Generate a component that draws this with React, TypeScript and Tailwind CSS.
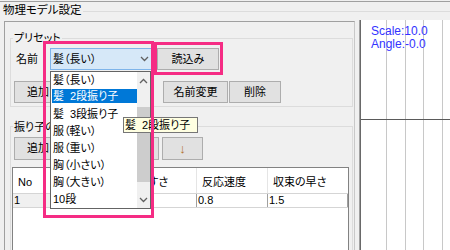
import React from 'react';

const btn = "flex h-[22px] items-center justify-center border border-[#adadad] bg-[#e1e1e1] leading-none";

const items = ["髪（長い）", "髪|2段振り子", "髪|3段振り子", "服（軽い）", "服（重い）", "胸（小さい）", "胸（大きい）", "10段"];

// "髪|2段振り子" -> 髪 + gap + 2段振り子
const Label = ({ t }: { t: string }) => {
  const [a, b] = t.split("|");
  if (b === undefined) return <>{t}</>;
  return (
    <>
      {a}
      <span className="inline-block w-[6px]" />
      {b}
    </>
  );
};

const Chevron = ({ up }: { up?: boolean }) => (
  <svg width="9" height="6" viewBox="0 0 9 6">
    <path d={up ? "M1 5 L4.5 1.5 L8 5" : "M1 1 L4.5 4.5 L8 1"} fill="none" stroke="#606060" strokeWidth="1.3" />
  </svg>
);

const Dropdown = () => (
  <div className="absolute left-[50px] top-[71px] flex h-[138px] w-[101px] border border-[#646464] bg-white">
    <div className="w-[86px]">
      {items.map((t, i) =>
        i === 1 ? (
          <div key={t} className="h-[17px]">
            <div className="ml-[1px] flex h-[14px] items-center bg-[#0078d7] pl-[1px] text-white"><Label t={t} /></div>
          </div>
        ) : (
          <div key={t} className="flex h-[17px] items-center pl-[2px]"><Label t={t} /></div>
        )
      )}
    </div>
    <div className="flex w-[13px] flex-col bg-[#f0f0f0]">
      <div className="flex h-[17px] items-center justify-center"><Chevron up /></div>
      <div className="flex-1">
        <div className="mt-[18px] h-[75px] bg-[#cdcdcd]" />
      </div>
      <div className="flex h-[17px] items-center justify-center"><Chevron /></div>
    </div>
  </div>
);

const cols = ["w-[40px]", "w-[58px]", "w-[86px]", "w-[71px]", "w-[80px]"];

const Table = () => (
  <div className="ml-[1px] mt-[7px] w-[337px] flex-1 border border-[#828282] bg-white">
    <div className="flex h-[25px]">
      {["No", "", "揺れやすさ", "反応速度", "収束の早さ"].map((h, i) => (
        <div key={i} className={`${cols[i]} flex items-center pl-[5px] pt-[3px] ${i < 4 ? "border-r border-[#e5e5e5]" : ""}`}>{h}</div>
      ))}
    </div>
    <div className="flex h-[15px] border-t border-b border-[#d5d5d5] leading-none">
      {["1", "", "", "0.8", "1.5"].map((v, i) => (
        <div key={i} className={`${cols[i]} flex items-center pl-[1px] border-r border-[#a0a0a0] ${i === 0 ? "bg-[#f0f0f0]" : ""}`}>{v}</div>
      ))}
    </div>
  </div>
);

export default function App() {
  return (
    <div className="relative h-[250px] w-[450px] overflow-hidden bg-[#f0f0f0] font-['Liberation_Sans','Noto_Sans_CJK_JP',sans-serif] text-[11px] text-black [font-feature-settings:'palt']">
      <div className="mt-[1px] h-px bg-[#a0a0a0]" />
      <div className="flex h-[18px] items-center">
        <span className="pl-[3px] pr-[2px] text-[11.5px] leading-none">物理モデル設定</span>
        <div className="h-px flex-1 bg-[#dcdcdc]" />
      </div>

      <div className="flex h-[230px]">
        {/* left settings frame */}
        <div className="ml-[4px] mt-[1px] flex w-[351px] flex-col border-l border-r border-t border-l-[#a0a0a0] border-t-[#a0a0a0] border-r-[#c8c8c8]">
          <div className="ml-[5px] mt-[16px] w-[343px] border border-[#dcdcdc] pb-[3px]">
            <div className="-mt-[7px] ml-[2px] w-fit bg-[#f0f0f0] px-[1px] leading-[12px]">プリセット</div>
            <div className="mt-[4px] flex h-[22px] items-center">
              <span className="w-[39px] pl-[5px]">名前</span>
              <div className="flex h-[22px] w-[103px] items-center justify-between border border-[#7eb4ea] bg-[#d6e8f8] pl-[2px] pr-[3px]">
                <span>髪（長い）</span>
                <Chevron />
              </div>
              <div className={`${btn} ml-[4px] h-[21px] w-[62px]`}>読込み</div>
            </div>
            <div className="mt-[11px] flex">
              <div className={`${btn} ml-[3px] w-[48px]`}>追加</div>
              <div className={`${btn} ml-[2px] w-[48px]`} />
              <div className={`${btn} ml-[51px] w-[65px]`}>名前変更</div>
              <div className={`${btn} ml-[1px] w-[52px]`}>削除</div>
            </div>
          </div>

          <div className="mb-[-4px] ml-[5px] mt-[19px] flex w-[343px] flex-1 flex-col border border-[#dcdcdc]">
            <div className="-mt-[6px] ml-[2px] w-fit bg-[#f0f0f0] px-[1px] leading-[12px]">振り子の設定</div>
            <div className="mt-[4px] flex">
              <div className={`${btn} ml-[3px] h-[23px] w-[48px]`}>追加</div>
              <div className={`${btn} ml-[2px] h-[23px] w-[48px]`} />
              <div className={`${btn} ml-[2px] h-[23px] w-[45px]`} />
              <div className={`${btn} ml-[3px] h-[23px] w-[41px] text-[13px] text-[#b0712a]`}>↓</div>
            </div>
            <Table />
          </div>
        </div>

        {/* preview canvas */}
        <div className="relative ml-[4px] flex-1 border-l border-[#a0a0a0] bg-white shadow-[inset_1px_0_0_#696969]">
          <svg className="absolute inset-0" width="90" height="230">
            {[26, 45, 63, 82].map(x => (
              <line key={x} x1={x + 0.5} y1="0" x2={x + 0.5} y2="230" stroke="#c8c8c8" />
            ))}
            <line x1="1" y1="99.5" x2="90" y2="99.5" stroke="#5a5a5a" />
          </svg>
          <div className="relative pl-[11px] pt-[5px] text-[12px] leading-[13px] text-[#3333ff]">
            <div>Scale:10.0</div>
            <div>Angle:-0.0</div>
          </div>
        </div>
      </div>

      <Dropdown />
      <div className="absolute left-[123px] top-[117px] flex h-[16px] w-[75px] items-center border border-[#767676] bg-[#ffffe1] pl-[1px] leading-none">
        <Label t="髪|2段振り子" />
      </div>
      <div className="absolute left-[43px] top-[41px] h-[177px] w-[111px] border-[3px] border-[#f52c84]" />
      <div className="absolute left-[154px] top-[42px] h-[33px] w-[69px] border-[3px] border-[#f52c84]" />
    </div>
  );
}
